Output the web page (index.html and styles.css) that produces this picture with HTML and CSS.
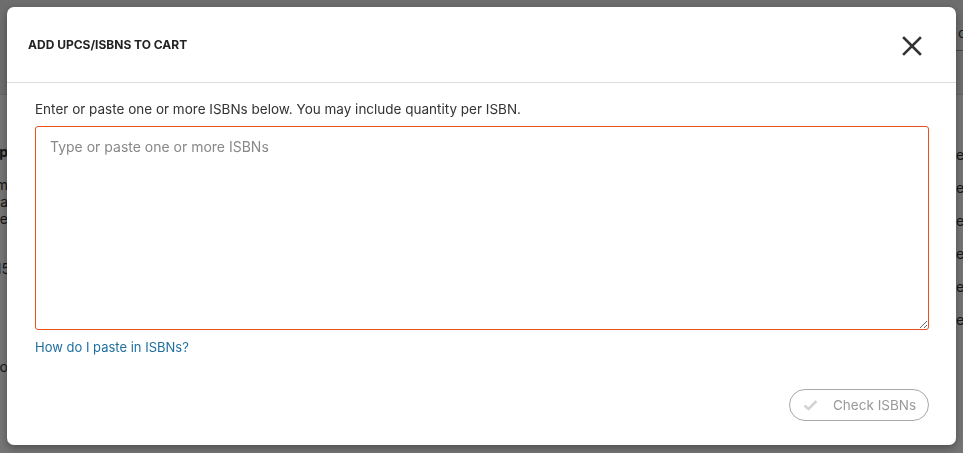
FILE: index.html
```html
<!DOCTYPE html>
<html lang="en">
<head>
  <meta charset="UTF-8" />
  <meta name="viewport" content="width=device-width, initial-scale=1.0" />
  <title>Add UPCs/ISBNs to Cart</title>
  <link rel="stylesheet" href="styles.css">
</head>
<body>
  <div class="page">
    <div class="page-top">
      <div class="page-tab">o</div>
    </div>
    <div class="page-main">
      <div class="side-left">
        <p class="side-head">Shop</p>
        <p>Item</p>
        <p>Data</p>
        <p>Type</p>
        <p class="side-num">15</p>
        <p class="side-low">Info</p>
      </div>
      <div class="side-right">
        <p>e</p>
        <p>e</p>
        <p>e</p>
        <p>e</p>
        <p>e</p>
        <p>e</p>
      </div>
    </div>
  </div>

  <div class="overlay">
    <div class="modal">
      <div class="modal-header">
        <h2>Add UPCs/ISBNs to Cart</h2>
        <button class="close-btn" aria-label="Close">
          <svg width="20" height="20" viewBox="0 0 20 20">
            <path d="M2 2 L18 18 M18 2 L2 18" stroke="#333" stroke-width="2.6" stroke-linecap="square" fill="none"/>
          </svg>
        </button>
      </div>
      <div class="modal-body">
        <p class="intro">Enter or paste one or more ISBNs below. You may include quantity per ISBN.</p>
        <textarea class="isbn-input" placeholder="Type or paste one or more ISBNs"></textarea>
        <a href="#" class="help-link">How do I paste in ISBNs?</a>
        <div class="modal-footer">
          <button class="check-btn" disabled>
            <svg width="15" height="12" viewBox="0 0 15 12">
              <path d="M1.5 6.5 L5.5 10 L13.5 2" stroke="#d4d4d4" stroke-width="2.6" fill="none"/>
            </svg>
            <span>Check ISBNs</span>
          </button>
        </div>
      </div>
    </div>
  </div>
</body>
</html>
```

FILE: styles.css
```css
* {
  margin: 0;
  padding: 0;
  box-sizing: border-box;
}

body {
  font-family: Inter, 'Noto Sans', sans-serif;
  background: #ffffff;
  color: #333;
  width: 963px;
  height: 453px;
  overflow: hidden;
}

/* page behind the dialog */
.page-top {
  height: 95px;
  background: #eeeeee;
  display: flex;
  justify-content: flex-end;
  align-items: flex-start;
  border-bottom: 1px solid #ddd;
}

.page-tab {
  width: 152px;
  height: 34px;
  margin-top: 17px;
  padding: 7px 0 0 146px;
  border-bottom: 1px solid #999;
  border-left: 1px solid #999;
  font-size: 14px;
  overflow: hidden;
  white-space: nowrap;
}

.page-main {
  display: flex;
  justify-content: space-between;
}

.side-left {
  margin-left: -52px;
  width: 60px;
  padding-top: 48px;
  font-size: 14px;
  color: #333;
  text-align: right;
}

.side-left p {
  line-height: 17px;
}

.side-left .side-head {
  font-weight: 700;
  margin-bottom: 16px;
}

.side-left .side-num {
  margin-top: 33px;
  margin-right: -2px;
}

.side-left .side-low {
  margin-top: 81px;
}

.side-right {
  width: 7px;
  padding-top: 43px;
  font-size: 14px;
}

.side-right p {
  line-height: 33px;
}

/* dialog */
.overlay {
  position: fixed;
  inset: 0;
  background: rgba(0, 0, 0, 0.54);
  padding: 7px 7px 8px 7px;
}

.modal {
  background: #ffffff;
  border-radius: 7px;
  height: 438px;
  box-shadow: 0 3px 8px rgba(0, 0, 0, 0.35);
  display: flex;
  flex-direction: column;
}

.modal-header {
  height: 76px;
  border-bottom: 1px solid #dcdcdc;
  display: flex;
  align-items: center;
  justify-content: space-between;
  padding: 0 34px 0 21px;
}

.modal-header h2 {
  font-size: 12px;
  font-weight: 700;
  text-transform: uppercase;
  color: #222;
}

.close-btn {
  background: none;
  border: none;
  width: 20px;
  height: 20px;
  cursor: pointer;
  margin-top: 2px;
}

.modal-body {
  flex: 1;
  padding: 17px 27px 0 28px;
  display: flex;
  flex-direction: column;
}

.intro {
  font-size: 13.5px;
  color: #333;
  line-height: 18px;
  margin-bottom: 8px;
}

.isbn-input {
  width: 100%;
  height: 204px;
  border: 1px solid #e8501e;
  border-radius: 3px;
  padding: 11px 14px;
  font-family: inherit;
  font-size: 14px;
  color: #333;
  outline: none;
}

.isbn-input::placeholder {
  color: #888;
}

.help-link {
  margin-top: 9px;
  font-size: 13px;
  color: #1f6f9f;
  text-decoration: none;
  align-self: flex-start;
}

.modal-footer {
  display: flex;
  justify-content: flex-end;
  margin-top: 34px;
}

.check-btn {
  width: 140px;
  height: 32px;
  border: 1px solid #a8a8a8;
  border-radius: 16px;
  background: #fff;
  display: flex;
  align-items: center;
  gap: 15px;
  padding-left: 13px;
  font-family: inherit;
  font-size: 13.5px;
  color: #999;
}
```
